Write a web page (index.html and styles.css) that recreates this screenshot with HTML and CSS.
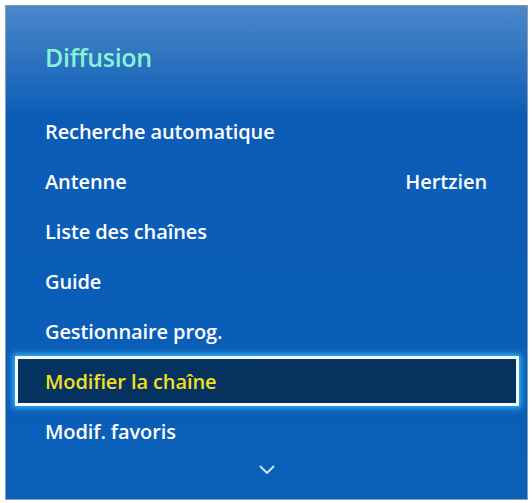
FILE: index.html
```html
<!DOCTYPE html>
<html>
<head>
<meta charset="utf-8">
<link rel="stylesheet" href="styles.css">
</head>
<body>
<div class="panel">
  <div class="title">Diffusion</div>
  <ul class="menu">
    <li class="row"><span>Recherche automatique</span></li>
    <li class="row"><span>Antenne</span><span class="value">Hertzien</span></li>
    <li class="row"><span>Liste des chaînes</span></li>
    <li class="row"><span>Guide</span></li>
    <li class="row"><span>Gestionnaire prog.</span></li>
    <li class="row selected"><span>Modifier la chaîne</span></li>
    <li class="row"><span>Modif. favoris</span></li>
  </ul>
  <div class="more">
    <svg width="16" height="10" viewBox="0 0 16 10"><path d="M1.5 1.5 L8 8 L14.5 1.5" fill="none" stroke="#cfe0f5" stroke-width="2" stroke-linecap="round" stroke-linejoin="round"/></svg>
  </div>
</div>
</body>
</html>
```
FILE: styles.css
```css
html, body { margin: 0; padding: 0; background: #ffffff; }
body { font-family: "Open Sans", "Noto Sans", sans-serif; }
.panel {
  margin: 5px 0 0 5px;
  width: 521px;
  height: 493px;
  border: 1px solid #8e9cb0;
  background: linear-gradient(to bottom, #4b87cb 0px, #2a70bf 60px, #0b5cb6 112px, #0a5fb9 100%);
  display: flex;
  flex-direction: column;
}
.title {
  color: #86f2d6;
  font-size: 25px;
  font-weight: 600;
  padding: 34px 0 0 39px;
  height: 64px;
  line-height: 34px;
  box-sizing: border-box;
  letter-spacing: -0.3px;
}
.menu { list-style: none; margin: 36px 0 0 0; padding: 0; }
.row {
  height: 50px;
  display: flex;
  align-items: center;
  justify-content: space-between;
  padding: 0 40px 0 39px;
  color: #ffffff;
  font-size: 20px;
  font-weight: 600;
  box-sizing: border-box;
  letter-spacing: -0.1px;
}
.row.selected {
  margin: 0 8px 0 9px;
  padding-left: 27px;
  background: #05325f;
  border: 3px solid #f4fbff;
  color: #f3df1f;
  box-shadow: 0 0 6px 2px #39b8f5;
  height: 50px;
}
.more {
  flex: 1;
  display: flex;
  justify-content: center;
  align-items: flex-start;
  padding-top: 9px;
}
```
